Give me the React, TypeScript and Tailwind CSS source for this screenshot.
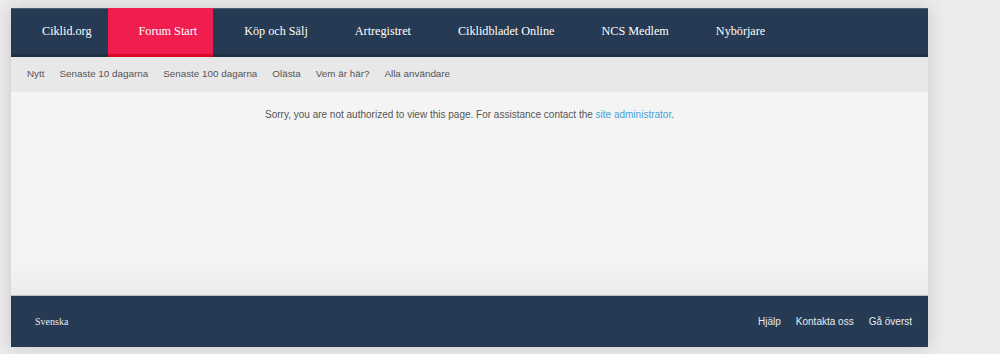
import React from 'react';

const mainNav = ['Ciklid.org', 'Forum Start', 'Köp och Sälj', 'Artregistret', 'Ciklidbladet Online', 'NCS Medlem', 'Nybörjare'];
const subNav = ['Nytt', 'Senaste 10 dagarna', 'Senaste 100 dagarna', 'Olästa', 'Vem är här?', 'Alla användare'];
const footerLinks = ['Hjälp', 'Kontakta oss', 'Gå överst'];

export default function App() {
    return (
        <div className="min-h-[354px] w-[1000px] bg-[#ececec] pt-[8px] pl-[11px] font-['Liberation_Sans',Arial,sans-serif]">
            <div className="w-[917px] shadow-[0_0_18px_rgba(0,0,0,0.16)]">
                {/* Main nav */}
                <nav className="flex h-[49px] bg-[#263a53] border-t border-[#4d5d72] border-b-[3px] border-b-[#1f3046] font-['Liberation_Serif','Times_New_Roman',serif] text-[12.2px] text-white">
                    {mainNav.map((item) => (
                        <a
                            key={item}
                            className={
                                item === 'Forum Start'
                                    ? 'flex items-center pl-[31px] pr-[16px] -mt-px -mb-[3px] bg-[#f01e4f] border-b-[3px] border-[#d90a25]'
                                    : 'flex items-center pl-[31px] pr-[16px]'
                            }
                        >
                            {item}
                        </a>
                    ))}
                </nav>

                {/* Sub nav */}
                <div className="flex items-center gap-[15px] h-[35px] pl-[16px] bg-[#e8e8e8] text-[9.85px] text-[#555]">
                    {subNav.map((item) => (
                        <a key={item}>{item}</a>
                    ))}
                </div>

                {/* Content */}
                <div className="h-[203px] pt-[15px] text-center text-[10px] text-[#555] bg-[linear-gradient(to_bottom,#f4f4f4_0%,#f4f4f4_85%,#ebebeb_100%)]">
                    Sorry, you are not authorized to view this page. For assistance contact the{' '}
                    <a className="text-[#4a9fd8]">site administrator</a>.
                </div>

                {/* Footer */}
                <footer className="flex items-center justify-between h-[52px] pl-[24px] pr-[16px] bg-[#263a53] border-t border-[#b9c0c8] text-[10px] text-[#e6ebf0]">
                    <span className="font-['Liberation_Serif','Times_New_Roman',serif]">Svenska</span>
                    <div className="flex gap-[15px]">
                        {footerLinks.map((item) => (
                            <a key={item}>{item}</a>
                        ))}
                    </div>
                </footer>
            </div>
        </div>
    );
}
